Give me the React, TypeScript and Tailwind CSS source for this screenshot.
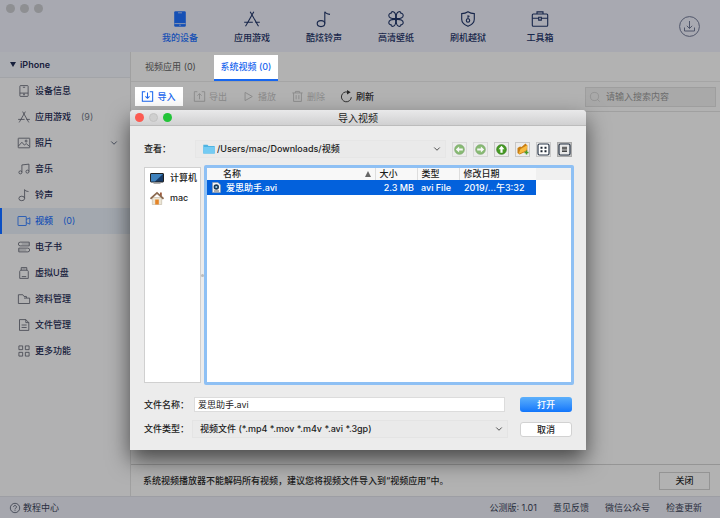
import React from 'react';
import { ChevronDown } from 'lucide-react';

type IconName =
  | 'phone'
  | 'apps'
  | 'note'
  | 'clover'
  | 'shield'
  | 'toolbox'
  | 'device'
  | 'photo'
  | 'music'
  | 'video'
  | 'book'
  | 'usb'
  | 'folder'
  | 'file'
  | 'grid'
  | 'import'
  | 'export'
  | 'play'
  | 'trash'
  | 'refresh'
  | 'search'
  | 'help';

const shapes: Record<IconName, React.ReactNode> = {
  phone: (
    <>
      <rect x="2.2" y="0.2" width="11.6" height="15.6" rx="1.2" fill="currentColor" stroke="none" />
      <path d="M6 1.8h4" stroke="#a8a9b1" strokeWidth="0.7" />
      <path d="M2.5 12.6h11M7.3 14.2h1.4" stroke="#a8a9b1" strokeWidth="0.8" />
    </>
  ),
  apps: <path d="M6.2 0.8 13.6 13.8M9.8 0.8 2.4 13.8M0.2 11.2h8.6M11.2 11.2h4.6M2.4 13.8l-.9 1.4M13.6 13.8l.9 1.4" />,
  note: (
    <>
      <ellipse cx="5" cy="12.6" rx="3.8" ry="3" />
      <path d="M8.8 12.6V.8c.8 1.800 2.600 2.200 5.200 2.600" />
    </>
  ),
  clover: (
    <>
      <path d="M7.6 7.6C3.5 8 .8 6.6.8 4.4c0-1.4 1-2.2 2.2-2.1C3 1.1 4 .4 5.2.7 7.3 1.2 8 4 7.6 7.6Z" />
      <path d="M8.4 7.6C12.5 8 15.2 6.6 15.2 4.4c0-1.4-1-2.2-2.2-2.1C13 1.1 12 .4 10.8.7 8.7 1.2 8 4 8.4 7.6Z" />
      <path d="M7.6 8.4C3.5 8 .8 9.4.8 11.6c0 1.4 1 2.2 2.2 2.1 0 1.2 1 1.9 2.2 1.6 2.1-.5 2.8-3.3 2.4-6.900Z" />
      <path d="M8.4 8.4c4.1-.4 6.8 1 6.8 3.200 0 1.400-1 2.200-2.200 2.100 0 1.200-1 1.900-2.200 1.600-2.100-.5-2.800-3.300-2.400-6.900Z" />
      <circle cx="8" cy="8" r="1" fill="currentColor" />
    </>
  ),
  shield: (
    <>
      <path d="M8 .7c2 1.3 4 1.8 6.300 1.900v5.600c0 3.400-2.600 5.500-6.300 7.100-3.700-1.600-6.300-3.700-6.300-7.100V2.600C4 2.500 6 2 8 .7Z" />
      <circle cx="8" cy="9.5" r="1.7" />
      <path d="M8 7.8V4.200M8 5.300h1.600" />
    </>
  ),
  toolbox: (
    <>
      <rect x="0.3" y="3" width="15.4" height="12.2" rx="1" />
      <path d="M5 3V.9h6V3M.3 7.200h6.400M9.300 7.200h6.400M6.700 6.300h2.600v2.800H6.700Z" />
    </>
  ),
  device: (
    <>
      <rect x="2.5" y="0.8" width="11" height="14.4" rx="0.8" />
      <path d="M2.500 10.800h11M6.500 3h3M8 11v1.800M6.800 13h2.400" />
    </>
  ),
  photo: (
    <>
      <rect x="0.3" y="1.6" width="15.4" height="12.8" rx="0.5" />
      <path d="m.6 12 4.600-5 3.300 3.800 2.400-2 4.500 3.800" />
      <circle cx="10.8" cy="5.4" r="1.3" />
    </>
  ),
  music: (
    <>
      <path d="M5.200 12.300V2.600L14.600 1.500v9.800" />
      <circle cx="3.2" cy="12.5" r="2" />
      <circle cx="12.6" cy="11.5" r="2" />
    </>
  ),
  video: (
    <>
      <rect x="0" y="2" width="11" height="12" rx="0.5" />
      <path d="m11 5.800 4.800-2v8.400l-4.800-2" />
    </>
  ),
  book: (
    <>
      <path d="M15 1.500H3a2.500 2.500 0 0 0 0 5h12ZM1 9.500h12a2.500 2.500 0 0 1 0 5H1Z" />
      <path d="M5 4h10M1 12h10" strokeWidth="0.6" />
    </>
  ),
  usb: (
    <>
      <path d="M4.300 4.300V.8h7.400v3.500M6.300 2.500h1M8.700 2.500h1M3.300 4.300h9.400l1 1.500v9.400H2.300V5.800Z" />
      <path d="M5 12.800h6" />
    </>
  ),
  folder: <path d="M.5 14V2.300h5.900L8 4.600h3.200v2.200h4.300V14ZM8 6.800h3.200" />,
  file: <path d="M2 .8h8.400l4 4v10.400H2ZM10.400.8v4h4M4.800 8h6.700M4.800 11.300h6.700" />,
  grid: <path d="M1.200 1.200h5v5h-5ZM9.800 1.200h5v5h-5ZM1.200 9.800h5v5h-5ZM9.800 9.800h5v5h-5Z" />,
  import: <path d="M4.800 1H.5v14h15V1h-4.300M8 2v8.500M5 7.700l3 3 3-3" strokeWidth="1.5" />,
  export: <path d="M4.800 1H.5v14h15V1h-4.300M8 12V4M5 6.800l3-3 3 3" strokeWidth="1.300" />,
  play: <path d="M3 2v12l10.500-6Z" strokeWidth="1.4" />,
  trash: <path d="M.5 2.800h15M5 2.800V.6h6v2.200M2.300 2.800v12.400h11.400V2.800M6 6v6M10 6v6" strokeWidth="1.3" />,
  refresh: (
    <>
      <path d="M15 9A7.200 7.200 0 1 1 9.500 1.500" strokeWidth="1.300" />
      <path d="M8.800-1.500 14 1.800 8.800 5Z" fill="currentColor" stroke="none" />
    </>
  ),
  search: (
    <>
      <circle cx="7.2" cy="7.2" r="6.5" />
      <path d="m12 12 3.500 3.500" />
    </>
  ),
  help: (
    <>
      <circle cx="8" cy="8" r="7.5" />
      <path d="M5.700 6.200a2.300 2.300 0 1 1 3.500 2c-.9.600-1.200 1-1.200 2M8 11.500v1.200" />
    </>
  ),
};

function Icon({ name, className = 'size-3' }: { name: IconName; className?: string }) {
  return (
    <svg
      viewBox="0 0 16 16"
      className={`shrink-0 overflow-visible ${className}`}
      fill="none"
      stroke="currentColor"
      strokeWidth="1.1"
      aria-hidden="true"
    >
      {shapes[name]}
    </svg>
  );
}

const navItems: { label: string; icon: IconName }[] = [
  { label: '我的设备', icon: 'phone' },
  { label: '应用游戏', icon: 'apps' },
  { label: '酷炫铃声', icon: 'note' },
  { label: '高清壁纸', icon: 'clover' },
  { label: '刷机越狱', icon: 'shield' },
  { label: '工具箱', icon: 'toolbox' },
];

const sideItems: { label: string; icon: IconName; count?: number; expandable?: boolean }[] = [
  { label: '设备信息', icon: 'device' },
  { label: '应用游戏', icon: 'apps', count: 9 },
  { label: '照片', icon: 'photo', expandable: true },
  { label: '音乐', icon: 'music' },
  { label: '铃声', icon: 'note' },
  { label: '视频', icon: 'video', count: 0 },
  { label: '电子书', icon: 'book' },
  { label: '虚拟U盘', icon: 'usb' },
  { label: '资料管理', icon: 'folder' },
  { label: '文件管理', icon: 'file' },
  { label: '更多功能', icon: 'grid' },
];

function Header() {
  return (
    <header className="relative flex h-[52px] shrink-0 bg-[#a8a9b1]">
      <div className="flex w-36 gap-[5px] pt-1 pl-1.5">
        <span className="size-[9px] rounded-full bg-[#8e8f92]" />
        <span className="size-[9px] rounded-full bg-[#8e8f92]" />
        <span className="size-[9px] rounded-full bg-[#8e8f92]" />
      </div>
      <nav className="flex">
        {navItems.map((item, index) => (
          <button
            key={item.label}
            className={`flex w-[72px] flex-col items-center gap-[5px] pt-[11px] leading-3 font-medium ${
              index === 0 ? 'text-[#1650b5]' : 'text-[#17264a]'
            }`}
          >
            <Icon name={item.icon} className="size-4" />
            {item.label}
          </button>
        ))}
      </nav>
      <button aria-label="下载" className="mt-4 mr-5 ml-auto size-[21px] text-[#50566a]">
        <svg viewBox="0 0 21 21" fill="none" stroke="currentColor" strokeWidth="1">
          <circle cx="10.5" cy="10.5" r="9.9" />
          <path d="M5.500 11.500v3.500h10v-3.500M10.500 5v7.500M7.800 9.800l2.700 2.700 2.700-2.700" />
        </svg>
      </button>
    </header>
  );
}

function Sidebar() {
  return (
    <aside className="w-[130px] shrink-0 bg-[#b1b1b2]">
      <div className="flex h-[26px] items-center gap-1 border-b border-[#a2a4a8] bg-[#abadb2] pl-2.5 font-semibold text-[#17203c]">
        <svg viewBox="0 0 6 5" className="h-[5px] w-1.5" fill="currentColor">
          <path d="M0 0h6L3 5Z" />
        </svg>
        iPhone
      </div>
      <ul>
        {sideItems.map((item) => {
          const active = item.label === '视频';
          return (
            <li key={item.label}>
              <a
                href="#"
                className={`flex h-[26px] items-center gap-[5px] border-l-2 pr-[11px] pl-4 font-medium ${
                  active ? 'border-[#0a4fc4] bg-[#a3a8af] text-[#1650b5]' : 'border-transparent text-[#17203c]'
                }`}
              >
                <Icon name={item.icon} className={active ? 'size-3' : 'size-3 text-[#444750]'} />
                {item.label}
                {item.count !== undefined && (
                  <span className={active ? 'ml-[5px] font-normal' : 'ml-[5px] font-normal text-[#50545e]'}>
                    ({item.count})
                  </span>
                )}
                {item.expandable && <ChevronDown className="ml-auto size-2.5 text-[#333a4a]" />}
              </a>
            </li>
          );
        })}
      </ul>
    </aside>
  );
}

function Toolbar() {
  return (
    <div className="flex h-[30px] items-center border-b border-[#a0a0a0] pr-1 pl-1">
      <button className="flex h-[19px] w-12 items-center justify-center gap-1 bg-white font-medium text-[#1a66ee]">
        <Icon name="import" className="size-[11px]" />
        导入
      </button>
      <div className="ml-[11px] flex gap-4 text-[#8a8a8a]">
        <button disabled className="flex items-center gap-1">
          <Icon name="export" className="size-[11px]" />
          导出
        </button>
        <button disabled className="flex items-center gap-1">
          <Icon name="play" className="size-[11px]" />
          播放
        </button>
        <button disabled className="flex items-center gap-1">
          <Icon name="trash" className="size-[11px]" />
          删除
        </button>
        <button className="flex items-center gap-1 font-medium text-[#222]">
          <Icon name="refresh" className="size-[11px]" />
          刷新
        </button>
      </div>
      <label className="ml-auto flex h-5 w-[131px] items-center gap-1.5 border border-[#9e9e9e] bg-[#a9a9a9] pl-1 text-[#8c8c8c]">
        <Icon name="search" className="size-2.5" />
        <input
          type="search"
          aria-label="搜索"
          placeholder="请输入搜索内容"
          className="min-w-0 flex-1 bg-transparent outline-none placeholder:text-[#6c6c6c]"
        />
      </label>
    </div>
  );
}

function ArrowIcon({ direction, muted }: { direction: 'left' | 'right' | 'up'; muted?: boolean }) {
  const turn = { left: 'rotate(-90 6 6)', right: 'rotate(90 6 6)', up: '' }[direction];
  return (
    <svg viewBox="0 0 12 12" className={muted ? 'size-[11px] opacity-60' : 'size-[11px]'}>
      <circle cx="6" cy="6" r="5.3" fill="#479b25" stroke="#28720f" strokeWidth="0.7" />
      <path d="M6 2 2.800 5.600h2v4h2.400v-4h2Z" fill="#fff" transform={turn} />
    </svg>
  );
}

function FolderPlusIcon() {
  return (
    <svg viewBox="0 0 12 12" className="size-3">
      <path d="M.5 5 3 3.500l1.500.5L8.500.5l1.800 2V8L2.500 11.500.5 10Z" fill="#c87d12" />
      <path d="m1.500 11 2-5L10.500 2l-1 5.500Z" fill="#f7b93e" />
      <path d="M9.500 7.500v4M7.500 9.500h4" stroke="#4a9c2a" strokeWidth="1.5" />
    </svg>
  );
}

function DetailsIcon({ list }: { list?: boolean }) {
  return (
    <svg viewBox="0 0 13 13" className="size-[13px]">
      <rect x="1" y="1" width="11" height="11" rx="1.5" fill={list ? '#e8e8e8' : '#fff'} stroke="#293546" strokeWidth="1.2" />
      {list ? (
        <path d="M4 4.300h5M4 5.700h5M4 7.100h5M4 8.500h5" stroke="#444" strokeWidth="1" />
      ) : (
        <path d="M3.500 3.700h2v2h-2ZM7.500 3.700h2v2h-2ZM3.500 7.300h2v2h-2ZM7.500 7.300h2v2h-2Z" fill="#1d2530" />
      )}
    </svg>
  );
}

const dialogTools = [
  { label: '后退', icon: <ArrowIcon direction="left" muted />, style: 'border-[#d9d9d9]' },
  { label: '前进', icon: <ArrowIcon direction="right" muted />, style: 'border-[#d9d9d9]' },
  { label: '上级目录', icon: <ArrowIcon direction="up" />, style: 'border-[#c8c8c8]' },
  { label: '新建文件夹', icon: <FolderPlusIcon />, style: 'border-[#c8c8c8]' },
  { label: '列表视图', icon: <DetailsIcon />, style: 'border-[#c8c8c8]' },
  { label: '详细视图', icon: <DetailsIcon list />, style: 'border-[#a8a8a8] bg-[#c4c4c4]' },
];

function FileTable() {
  return (
    <table className="w-full table-fixed border-collapse text-left leading-3">
      <colgroup>
        <col />
        <col className="w-[42px]" />
        <col className="w-[42px]" />
        <col className="w-[77px]" />
        <col className="w-[35px]" />
      </colgroup>
      <thead>
        <tr className="h-3 bg-[#f8f8f8] *:p-0 *:font-medium">
          <th>
            <span className="flex items-center justify-between pr-1 pl-4">
              名称
              <svg viewBox="0 0 6 6" className="size-1.5" fill="#666">
                <path d="M3 0 6 6H0Z" />
              </svg>
            </span>
          </th>
          <th className="border-l border-[#ddd]">
            <span className="pl-1">大小</span>
          </th>
          <th className="border-l border-[#ddd]">
            <span className="pl-1">类型</span>
          </th>
          <th className="border-l border-[#ddd]">
            <span className="pl-1">修改日期</span>
          </th>
          <th className="bg-[#f0f0f0]" />
        </tr>
      </thead>
      <tbody>
        <tr className="h-[15px] font-medium text-white *:p-0">
          <td className="bg-[#0361dc]">
            <span className="flex items-center gap-[5px] pl-[5px]">
              <svg viewBox="0 0 9 11" className="h-[11px] w-[9px]">
                <path d="M.5.5h5.500l2.500 2.500v7.500h-8Z" fill="#f4f4f4" stroke="#999" strokeWidth="0.5" />
                <circle cx="4.3" cy="5" r="2.7" fill="#183a58" />
                <circle cx="4.3" cy="5" r="1.1" fill="#9ed0ee" />
                <path d="M2 9h5" stroke="#555" strokeWidth="0.9" />
              </svg>
              爱思助手.avi
            </span>
          </td>
          <td className="bg-[#0361dc] text-right">
            <span className="pr-[3px]">2.3 MB</span>
          </td>
          <td className="bg-[#0361dc]">
            <span className="pl-1">avi File</span>
          </td>
          <td className="bg-[#0361dc]">
            <span className="pl-[5px]">2019/...午3:32</span>
          </td>
          <td />
        </tr>
      </tbody>
    </table>
  );
}

function ImportDialog() {
  return (
    <section
      role="dialog"
      aria-labelledby="dialog-title"
      className="absolute top-[110px] left-[130px] w-[456px] rounded-t-sm bg-[#ececec] text-[#1c1c1c] shadow-[0_10px_22px_rgba(0,0,0,0.6)]"
    >
      <div className="relative flex h-4 items-center justify-center rounded-t-sm border-b border-[#bcbcbc] bg-linear-to-b from-[#e9e9ea] to-[#d0d0d1]">
        <div className="absolute left-[5px] flex gap-[5px]">
          <button aria-label="关闭窗口" className="size-[9px] rounded-full bg-[#fc5b52]" />
          <button aria-label="最小化" disabled className="size-[9px] rounded-full border border-[#c2c2c2] bg-[#cfcfcf]" />
          <button aria-label="缩放" className="size-[9px] rounded-full bg-[#22c438]" />
        </div>
        <h2 id="dialog-title" className="text-[10px] leading-4">
          导入视频
        </h2>
      </div>

      <div className="px-3.5 pt-3.5 pb-3">
        <div className="flex h-[18px] items-center gap-1.5">
          <label htmlFor="look-in" className="w-[45px] font-medium">
            查看：
          </label>
          <div className="relative h-[18px] flex-1">
            <select id="look-in" className="h-full w-full appearance-none border border-[#e6e6e6] bg-[#eaeaea] pl-[21px] font-medium">
              <option>/Users/mac/Downloads/视频</option>
            </select>
            <svg viewBox="0 0 12 10" className="pointer-events-none absolute top-1 left-2 h-2.5 w-3">
              <path d="M.3.8h4.200l1 1.200h6.200v7.500H.3Z" fill="#4fb4e2" />
              <path d="M.3 3h11.400v6.500H.3Z" fill="#74cbf3" />
            </svg>
            <ChevronDown className="pointer-events-none absolute top-1 right-1 size-2.5 text-[#333]" />
          </div>
          <div className="flex gap-1.5">
            {dialogTools.map((tool) => (
              <button
                key={tool.label}
                aria-label={tool.label}
                className={`flex size-[15px] items-center justify-center border ${tool.style}`}
              >
                {tool.icon}
              </button>
            ))}
          </div>
        </div>

        <div className="mt-[7px] flex h-[220px]">
          <ul className="my-0.5 w-[57px] border border-[#d0d0d0] bg-white font-medium">
            <li className="flex h-5 items-center gap-1.5 pl-[5px]">
              <svg viewBox="0 0 14 11" className="h-[11px] w-3.5 shrink-0">
                <rect x="0.5" y="0.5" width="13" height="8.5" rx="0.5" fill="#173b68" stroke="#222" />
                <path d="M1 1h12L5 8.500H1Z" fill="#3f82bd" />
                <path d="M3.500 10.300h7" stroke="#999" />
              </svg>
              <span className="whitespace-nowrap">计算机</span>
            </li>
            <li className="flex h-5 items-center gap-1.5 pl-[5px]">
              <svg viewBox="0 0 14 14" className="size-3.5 shrink-0">
                <path d="M2.300 6.500h9.400v7H2.300Z" fill="#ece5d5" stroke="#b6ab95" strokeWidth="0.5" />
                <path d="M10 1.500h1.800V5H10Z" fill="#9c5b3b" />
                <path d="m.5 7.800 6.500-6 6.500 6" fill="none" stroke="#8b6a50" strokeWidth="1.7" />
                <path d="M5.200 8.500h3.600v5H5.200Z" fill="#e58426" />
              </svg>
              mac
            </li>
          </ul>
          <div className="flex w-[3px] items-center">
            <span className="size-[3px] rounded-full bg-[#bbb]" />
          </div>
          <div className="-mr-0.5 flex-1 rounded-xs border-[3px] border-[#8ec0f4] bg-white">
            <FileTable />
          </div>
        </div>

        <div className="mt-3 grid grid-cols-[48px_1fr_52px] items-center gap-y-2">
          <label htmlFor="file-name" className="font-medium whitespace-nowrap">
            文件名称：
          </label>
          <div className="mr-[15px] ml-0.5">
            <input
              id="file-name"
              defaultValue="爱思助手.avi"
              className="block h-[15px] w-full border border-[#dcdcdc] bg-white pl-[3px] outline-none"
            />
          </div>
          <button className="h-[15px] rounded-[3px] bg-linear-to-b from-[#5cb0fb] to-[#0f75fb] leading-[15px] font-medium text-white">
            打开
          </button>
          <label htmlFor="file-type" className="font-medium whitespace-nowrap">
            文件类型：
          </label>
          <div className="relative mr-3 h-[18px]">
            <select id="file-type" className="h-full w-full appearance-none border border-[#e4e4e4] bg-[#eaeaea] pl-[7px] font-medium">
              <option>视频文件 (*.mp4 *.mov *.m4v *.avi *.3gp)</option>
            </select>
            <ChevronDown className="pointer-events-none absolute top-1 right-1 size-2.5 text-[#333]" />
          </div>
          <button className="h-[15px] rounded-[3px] border border-[#d2d2d2] bg-white leading-[13px] font-medium">取消</button>
        </div>
      </div>
    </section>
  );
}

export default function App() {
  return (
    <div className="relative flex min-h-screen flex-col overflow-hidden bg-[#b2b2b2] font-['Inter','Noto_Sans_CJK_SC',sans-serif] text-[9px] leading-3">
      <Header />
      <div className="flex flex-1">
        <Sidebar />
        <main className="flex min-w-0 flex-1 flex-col border-l border-[#a0a0a0]">
          <div className="flex h-[30px] items-end border-b border-[#a5a5a5]">
            <button className="h-[26px] w-[83px] pr-1 pb-0.5 text-[#444]">视频应用 (0)</button>
            <button className="h-[26px] w-16 border-b-2 border-[#1666ef] bg-white font-medium text-[#1a66ee]">
              系统视频 (0)
            </button>
          </div>
          <Toolbar />
          <div className="flex-1" />
          <div className="flex h-8 items-center justify-between border-t border-[#959595] pr-2.5 pl-3 text-[#1a1a1a]">
            <p className="font-medium">系统视频播放器不能解码所有视频，建议您将视频文件导入到“视频应用”中。</p>
            <button className="h-[18px] w-[51px] border border-[#949494] font-medium">关闭</button>
          </div>
        </main>
      </div>
      <footer className="flex h-[22px] shrink-0 items-center justify-between border-t border-[#9d9ea4] bg-[#a6a7ae] pr-[18px] pl-2.5 text-[#292e3d]">
        <a href="#" className="flex items-center gap-[3px]">
          <Icon name="help" className="size-2.5" />
          教程中心
        </a>
        <div className="flex gap-4">
          <span>公测版: 1.01</span>
          <a href="#">意见反馈</a>
          <a href="#">微信公众号</a>
          <a href="#">检查更新</a>
        </div>
      </footer>
      <ImportDialog />
    </div>
  );
}
